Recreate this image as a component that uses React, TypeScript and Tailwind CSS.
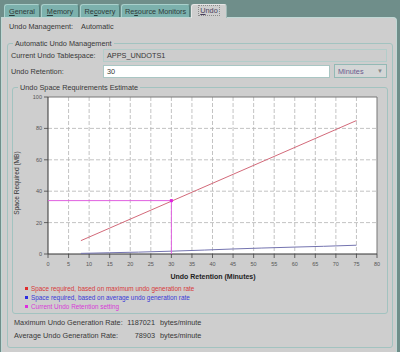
import React from 'react';

const X0 = 48;
const X1 = 377;
const Y0 = 254;
const Y1 = 97;

const sx = (m: number) => X0 + (m / 80) * (X1 - X0);
const sy = (v: number) => Y0 - (v / 100) * (Y0 - Y1);

const tabs = [
  { pre: '', key: 'G', post: 'eneral', w: 'w-[36px]' },
  { pre: '', key: 'M', post: 'emory', w: 'w-[38px]' },
  { pre: 'Re', key: 'c', post: 'overy', w: 'w-[40px]' },
  { pre: 'Re', key: 's', post: 'ource Monitors', w: 'w-[69px]' },
];

const TabBar = () => (
  <div className="flex items-end gap-[1px] pl-[4px] h-[17px]">
    {tabs.map(t => (
      <div
        key={t.post}
        className={`${t.w} h-[13px] flex items-center justify-center rounded-t-[3px] bg-[#7cb1ad] border-t border-l border-[#a9d0cc] border-r border-r-[#557f7b] text-[#2e3a3a]`}
      >
        <span>
          {t.pre}
          <span className="underline">{t.key}</span>
          {t.post}
        </span>
      </div>
    ))}
    <div className="relative z-10 w-[36px] h-[14px] -mb-[1px] flex items-start justify-center pt-[1px] rounded-t-[3px] bg-[#cecece] border-t border-l border-[#e6e6e6] border-r border-r-[#9fb9b6]">
      <span className="outline outline-1 outline-dotted outline-[#8a8a8a] px-[1px] text-[#4a3f5c]">
        <span className="underline">U</span>ndo
      </span>
    </div>
  </div>
);

const Chart = () => {
  const xs = Array.from({ length: 17 }, (_, i) => i * 5);
  const ys = [0, 20, 40, 60, 80, 100];
  const blue = [
    [8, 0.4], [15, 0.8], [22, 1.2], [30, 1.8], [38, 2.5], [45, 3.2],
    [52, 3.8], [60, 4.4], [67, 4.9], [75, 5.6],
  ];
  const cur = { x: sx(30), y: sy(34) };
  return (
    <svg width={374} height={190} viewBox="13 92 374 190" className="block">
      <rect x={X0} y={Y1} width={X1 - X0} height={Y0 - Y1} fill="#ffffff" />
      {xs.slice(1, 16).map(m => (
        <line key={'gx' + m} x1={sx(m)} y1={Y1} x2={sx(m)} y2={Y0} stroke="#b4b4b4" strokeWidth={0.8} strokeDasharray="4 2" />
      ))}
      {ys.slice(1, 5).map(v => (
        <line key={'gy' + v} x1={X0} y1={sy(v)} x2={X1} y2={sy(v)} stroke="#b4b4b4" strokeWidth={0.8} strokeDasharray="4 2" />
      ))}
      <line x1={X0} y1={Y1} x2={X1} y2={Y1} stroke="#777" strokeWidth={1} />
      <line x1={X1} y1={Y1} x2={X1} y2={Y0} stroke="#777" strokeWidth={1} />
      <line x1={X0} y1={Y1} x2={X0} y2={Y0} stroke="#333" strokeWidth={1} />
      <line x1={X0} y1={Y0} x2={X1} y2={Y0} stroke="#333" strokeWidth={1} />
      {ys.map(v => (
        <g key={'ty' + v}>
          <line x1={X0 - 4} y1={sy(v)} x2={X0} y2={sy(v)} stroke="#444" strokeWidth={0.8} />
          <text x={X0 - 6} y={sy(v) + 2} fontSize={5.5} fill="#555" textAnchor="end">{v}</text>
        </g>
      ))}
      {xs.map(m => (
        <g key={'tx' + m}>
          <line x1={sx(m)} y1={Y0} x2={sx(m)} y2={Y0 + 4} stroke="#444" strokeWidth={0.8} />
          <text x={sx(m)} y={Y0 + 12} fontSize={5.5} fill="#555" textAnchor="middle">{m}</text>
        </g>
      ))}
      <polyline
        points={blue.map(([m, v]) => `${sx(m)},${sy(v)}`).join(' ')}
        fill="none" stroke="#7474b0" strokeWidth={1}
      />
      <line x1={sx(8)} y1={sy(8.5)} x2={sx(75)} y2={sy(85)} stroke="#d36a7a" strokeWidth={1} />
      <line x1={X0} y1={cur.y} x2={cur.x} y2={cur.y} stroke="#e060e0" strokeWidth={1} />
      <line x1={cur.x} y1={cur.y} x2={cur.x} y2={Y0} stroke="#e060e0" strokeWidth={1} />
      <rect x={cur.x - 1.5} y={cur.y - 1.5} width={3} height={3} fill="#e020e0" />
      <text x={213} y={279} fontSize={7} fontWeight="bold" fill="#222" textAnchor="middle">Undo Retention (Minutes)</text>
      <text x={19} y={183} fontSize={6.6} fill="#333" textAnchor="middle" transform="rotate(-90 19 183)">Space Required (MB)</text>
    </svg>
  );
};

const legend = [
  { c: 'bg-[#e02c2c]', t: 'text-[#d83a3a]', label: 'Space required, based on maximum undo generation rate' },
  { c: 'bg-[#2c2ce0]', t: 'text-[#3a3ad8]', label: 'Space required, based on average undo generation rate' },
  { c: 'bg-[#e02ce0]', t: 'text-[#d83ad8]', label: 'Current Undo Retention setting' },
];

export default function App() {
  return (
    <div className="w-[400px] h-[352px] bg-[#6f8e8a] overflow-hidden font-['Liberation_Sans',Arial,sans-serif] text-[#383838] text-[7.3px] leading-[9px]">
      <TabBar />
      <div className="ml-[1px] w-[396px] h-[335px] bg-[#cecece] border border-b-0 border-[#c0d8d5] rounded-tr-[4px] pt-[3.5px]">
        <div className="flex pl-[7px]">
          <span>Undo Management:</span>
          <span className="ml-[8px]">Automatic</span>
        </div>

        <fieldset className="ml-[5px] mt-[8px] w-[386px] border border-[#a2c3c0] rounded-[3px] pt-[1.5px] pb-[7px]">
          <legend className="ml-[5px] px-[2px]">Automatic Undo Management</legend>

          <div className="flex items-center h-[13px] pl-[3px]">
            <span className="w-[92px]">Current Undo Tablespace:</span>
            <div className="w-[284px] h-[13px] border border-[#b3cdca] bg-[#cdcdcd] pl-[3px] flex items-center">APPS_UNDOTS1</div>
          </div>

          <div className="flex items-center h-[14px] mt-[2px] pl-[3px]">
            <span className="w-[92px]">Undo Retention:</span>
            <div className="w-[227px] h-[13px] border border-[#a9c6c3] bg-white pl-[3px] flex items-center">30</div>
            <div className="ml-[4px] w-[53px] h-[14px] border border-[#93b9b5] bg-[#d3d6d6] pl-[3px] pr-[3px] flex items-center justify-between text-[#6b5a8e]">
              <span>Minutes</span>
              <span className="text-[6px] text-[#888]">▼</span>
            </div>
          </div>

          <fieldset className="ml-[4px] mt-[4.5px] w-[376px] border border-[#a2c3c0] rounded-[3px] pt-[0.5px] pb-[2px]">
            <legend className="ml-[5px] px-[2px]">Undo Space Requirements Estimate</legend>
            <Chart />
            <div className="mt-[1.5px] pl-[12px] text-[6.4px]">
              {legend.map(l => (
                <div key={l.label} className="flex items-center h-[9px]">
                  <span className={`w-[3px] h-[3px] ${l.c}`} />
                  <span className={`ml-[3px] ${l.t}`}>{l.label}</span>
                </div>
              ))}
            </div>
          </fieldset>

          <div className="flex mt-[4.5px] pl-[6px]">
            <span className="w-[112px]">Maximum Undo Generation Rate:</span>
            <span className="w-[29px] text-right">1187021</span>
            <span className="ml-[5px]">bytes/minute</span>
          </div>
          <div className="flex mt-[4px] pl-[6px]">
            <span className="w-[112px]">Average Undo Generation Rate:</span>
            <span className="w-[29px] text-right">78903</span>
            <span className="ml-[5px]">bytes/minute</span>
          </div>
        </fieldset>
      </div>
    </div>
  );
}
